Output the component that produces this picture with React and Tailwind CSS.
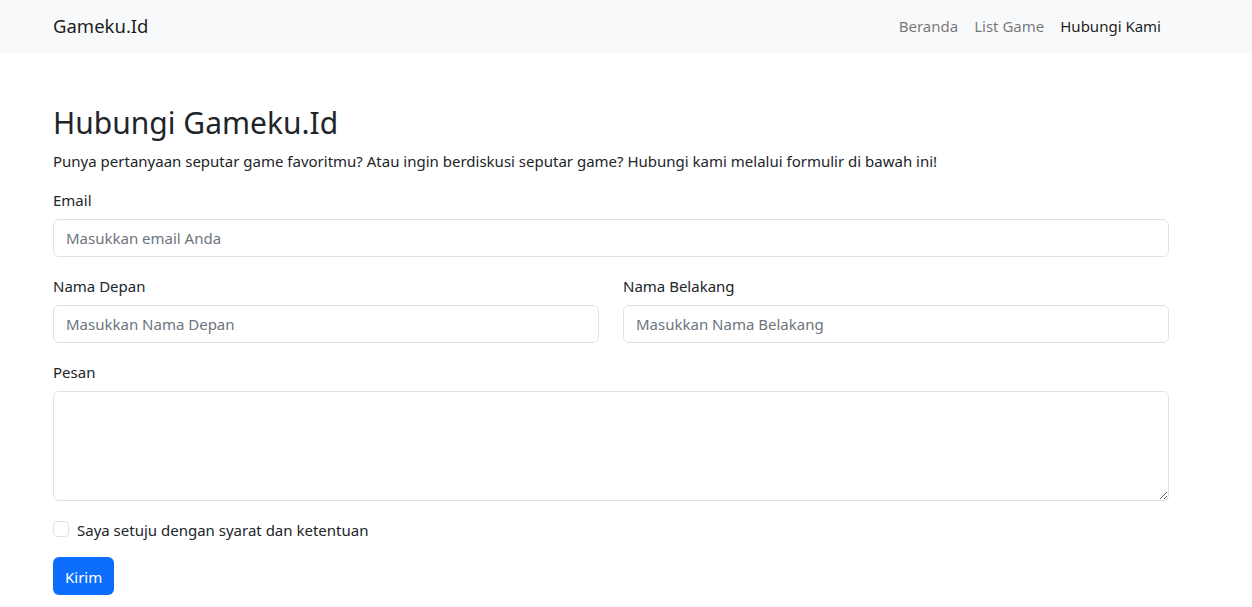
import React from "react";

const App = () => {
  return (
    <div className="min-h-screen bg-white text-[#212529] font-['Noto_Sans','Liberation_Sans',sans-serif] text-[15px] leading-6">
      {/* Navbar */}
      <nav className="bg-[#f8f9fa] h-[53px] flex items-center">
        <div className="ml-[41px] w-[1140px] px-3 flex items-center justify-between">
          <a href="#" className="text-[18.5px] leading-[30px] text-black/90 -mt-px">Gameku.Id</a>
          <ul className="flex -mt-px">
            <li><a href="#" className="block px-2 text-black/55">Beranda</a></li>
            <li><a href="#" className="block px-2 text-black/55">List Game</a></li>
            <li><a href="#" className="block px-2 text-black/90">Hubungi Kami</a></li>
          </ul>
        </div>
      </nav>

      {/* Content */}
      <div className="ml-[41px] w-[1140px] px-3 mt-[51px]">
        <h2 className="text-[30px] leading-[38.4px] font-normal mb-[5px]">Hubungi Gameku.Id</h2>
        <p className="pt-[2px] mb-[14px]">
          Punya pertanyaan seputar game favoritmu? Atau ingin berdiskusi seputar game? Hubungi kami melalui formulir di bawah ini!
        </p>

        <form onSubmit={(e) => e.preventDefault()}>
          <div className="mb-4">
            <label htmlFor="email" className="block pt-px mb-[7px]">Email</label>
            <input
              id="email"
              type="email"
              placeholder="Masukkan email Anda"
              className="w-full h-[38px] px-3 border border-[#dee2e6] rounded-md placeholder:text-[#6c757d] outline-none"
            />
          </div>

          <div className="grid grid-cols-2 gap-6 mb-4">
            <div>
              <label htmlFor="depan" className="block pt-px mb-[7px]">Nama Depan</label>
              <input
                id="depan"
                type="text"
                placeholder="Masukkan Nama Depan"
                className="w-full h-[38px] px-3 border border-[#dee2e6] rounded-md placeholder:text-[#6c757d] outline-none"
              />
            </div>
            <div>
              <label htmlFor="belakang" className="block pt-px mb-[7px]">Nama Belakang</label>
              <input
                id="belakang"
                type="text"
                placeholder="Masukkan Nama Belakang"
                className="w-full h-[38px] px-3 border border-[#dee2e6] rounded-md placeholder:text-[#6c757d] outline-none"
              />
            </div>
          </div>

          <div className="mb-4">
            <label htmlFor="pesan" className="block pt-px mb-[7px]">Pesan</label>
            <textarea
              id="pesan"
              className="block w-full h-[110px] px-3 py-1.5 border border-[#dee2e6] rounded-md outline-none"
            />
          </div>

          <div className="mb-4 h-6 flex items-center">
            <input
              id="setuju"
              type="checkbox"
              className="appearance-none w-4 h-4 border border-[#dee2e6] rounded bg-white"
            />
            <label htmlFor="setuju" className="ml-2 pt-px">Saya setuju dengan syarat dan ketentuan</label>
          </div>

          <button type="submit" className="h-[38px] px-3 pt-px bg-[#0d6efd] text-white rounded-md">
            Kirim
          </button>
        </form>
      </div>
    </div>
  );
};

export default App;
